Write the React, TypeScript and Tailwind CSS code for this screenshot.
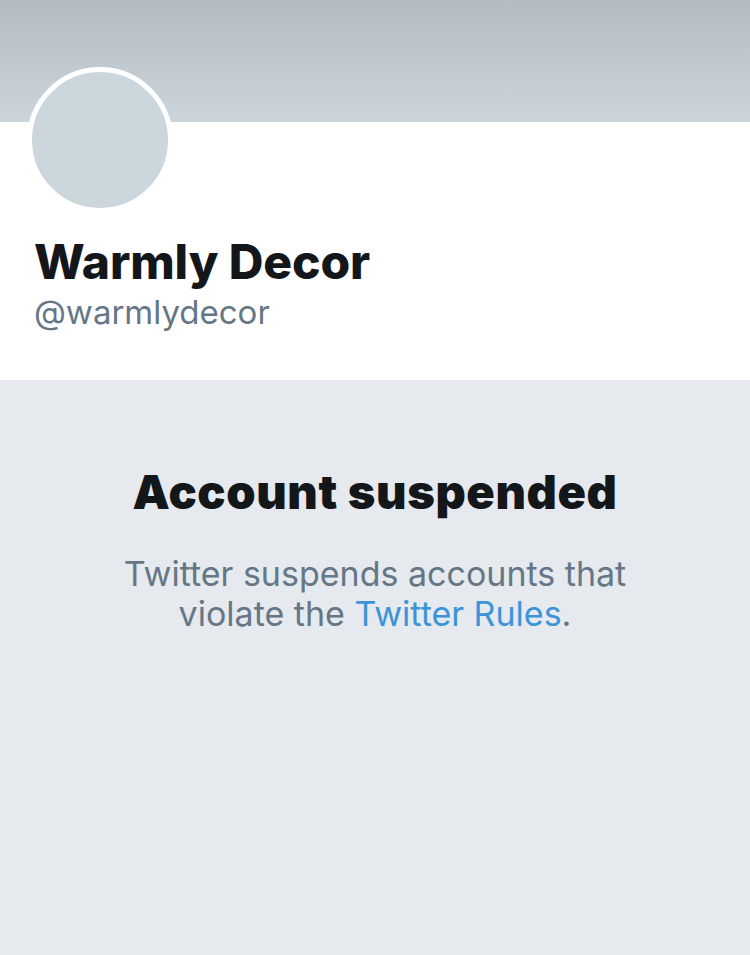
const App = () => {
  return (
    <div className="w-[750px] h-[955px] flex flex-col bg-[#e6e9ee] font-['Inter','Liberation_Sans',sans-serif]">
      <div className="h-[122px] shrink-0 bg-gradient-to-b from-[#b3bbc3] to-[#ccd5dc]"></div>
      <section className="h-[258px] shrink-0 bg-white px-[34px]">
        <div className="-mt-[55px] -ml-[7px] w-[146px] h-[146px] rounded-full border-[5px] border-white bg-[#ccd6dd]"></div>
        <h1 className="mt-[20px] text-[48px] leading-[58px] font-extrabold tracking-[-0.1px] text-[#14171a]">
          Warmly Decor
        </h1>
        <p className="mt-[1px] text-[33px] leading-[40px] text-[#657786]">@warmlydecor</p>
      </section>
      <section className="flex flex-col items-center pt-[84px] text-center">
        <h2 className="text-[47px] leading-[56px] font-black tracking-[0.6px] text-[#14171a]">
          Account suspended
        </h2>
        <p className="mt-[34px] text-[34px] leading-[40px] text-[#657786]">
          Twitter suspends accounts that
          <br />
          violate the <span className="text-[#3b94d9]">Twitter Rules</span>.
        </p>
      </section>
    </div>
  );
};

export default App;
